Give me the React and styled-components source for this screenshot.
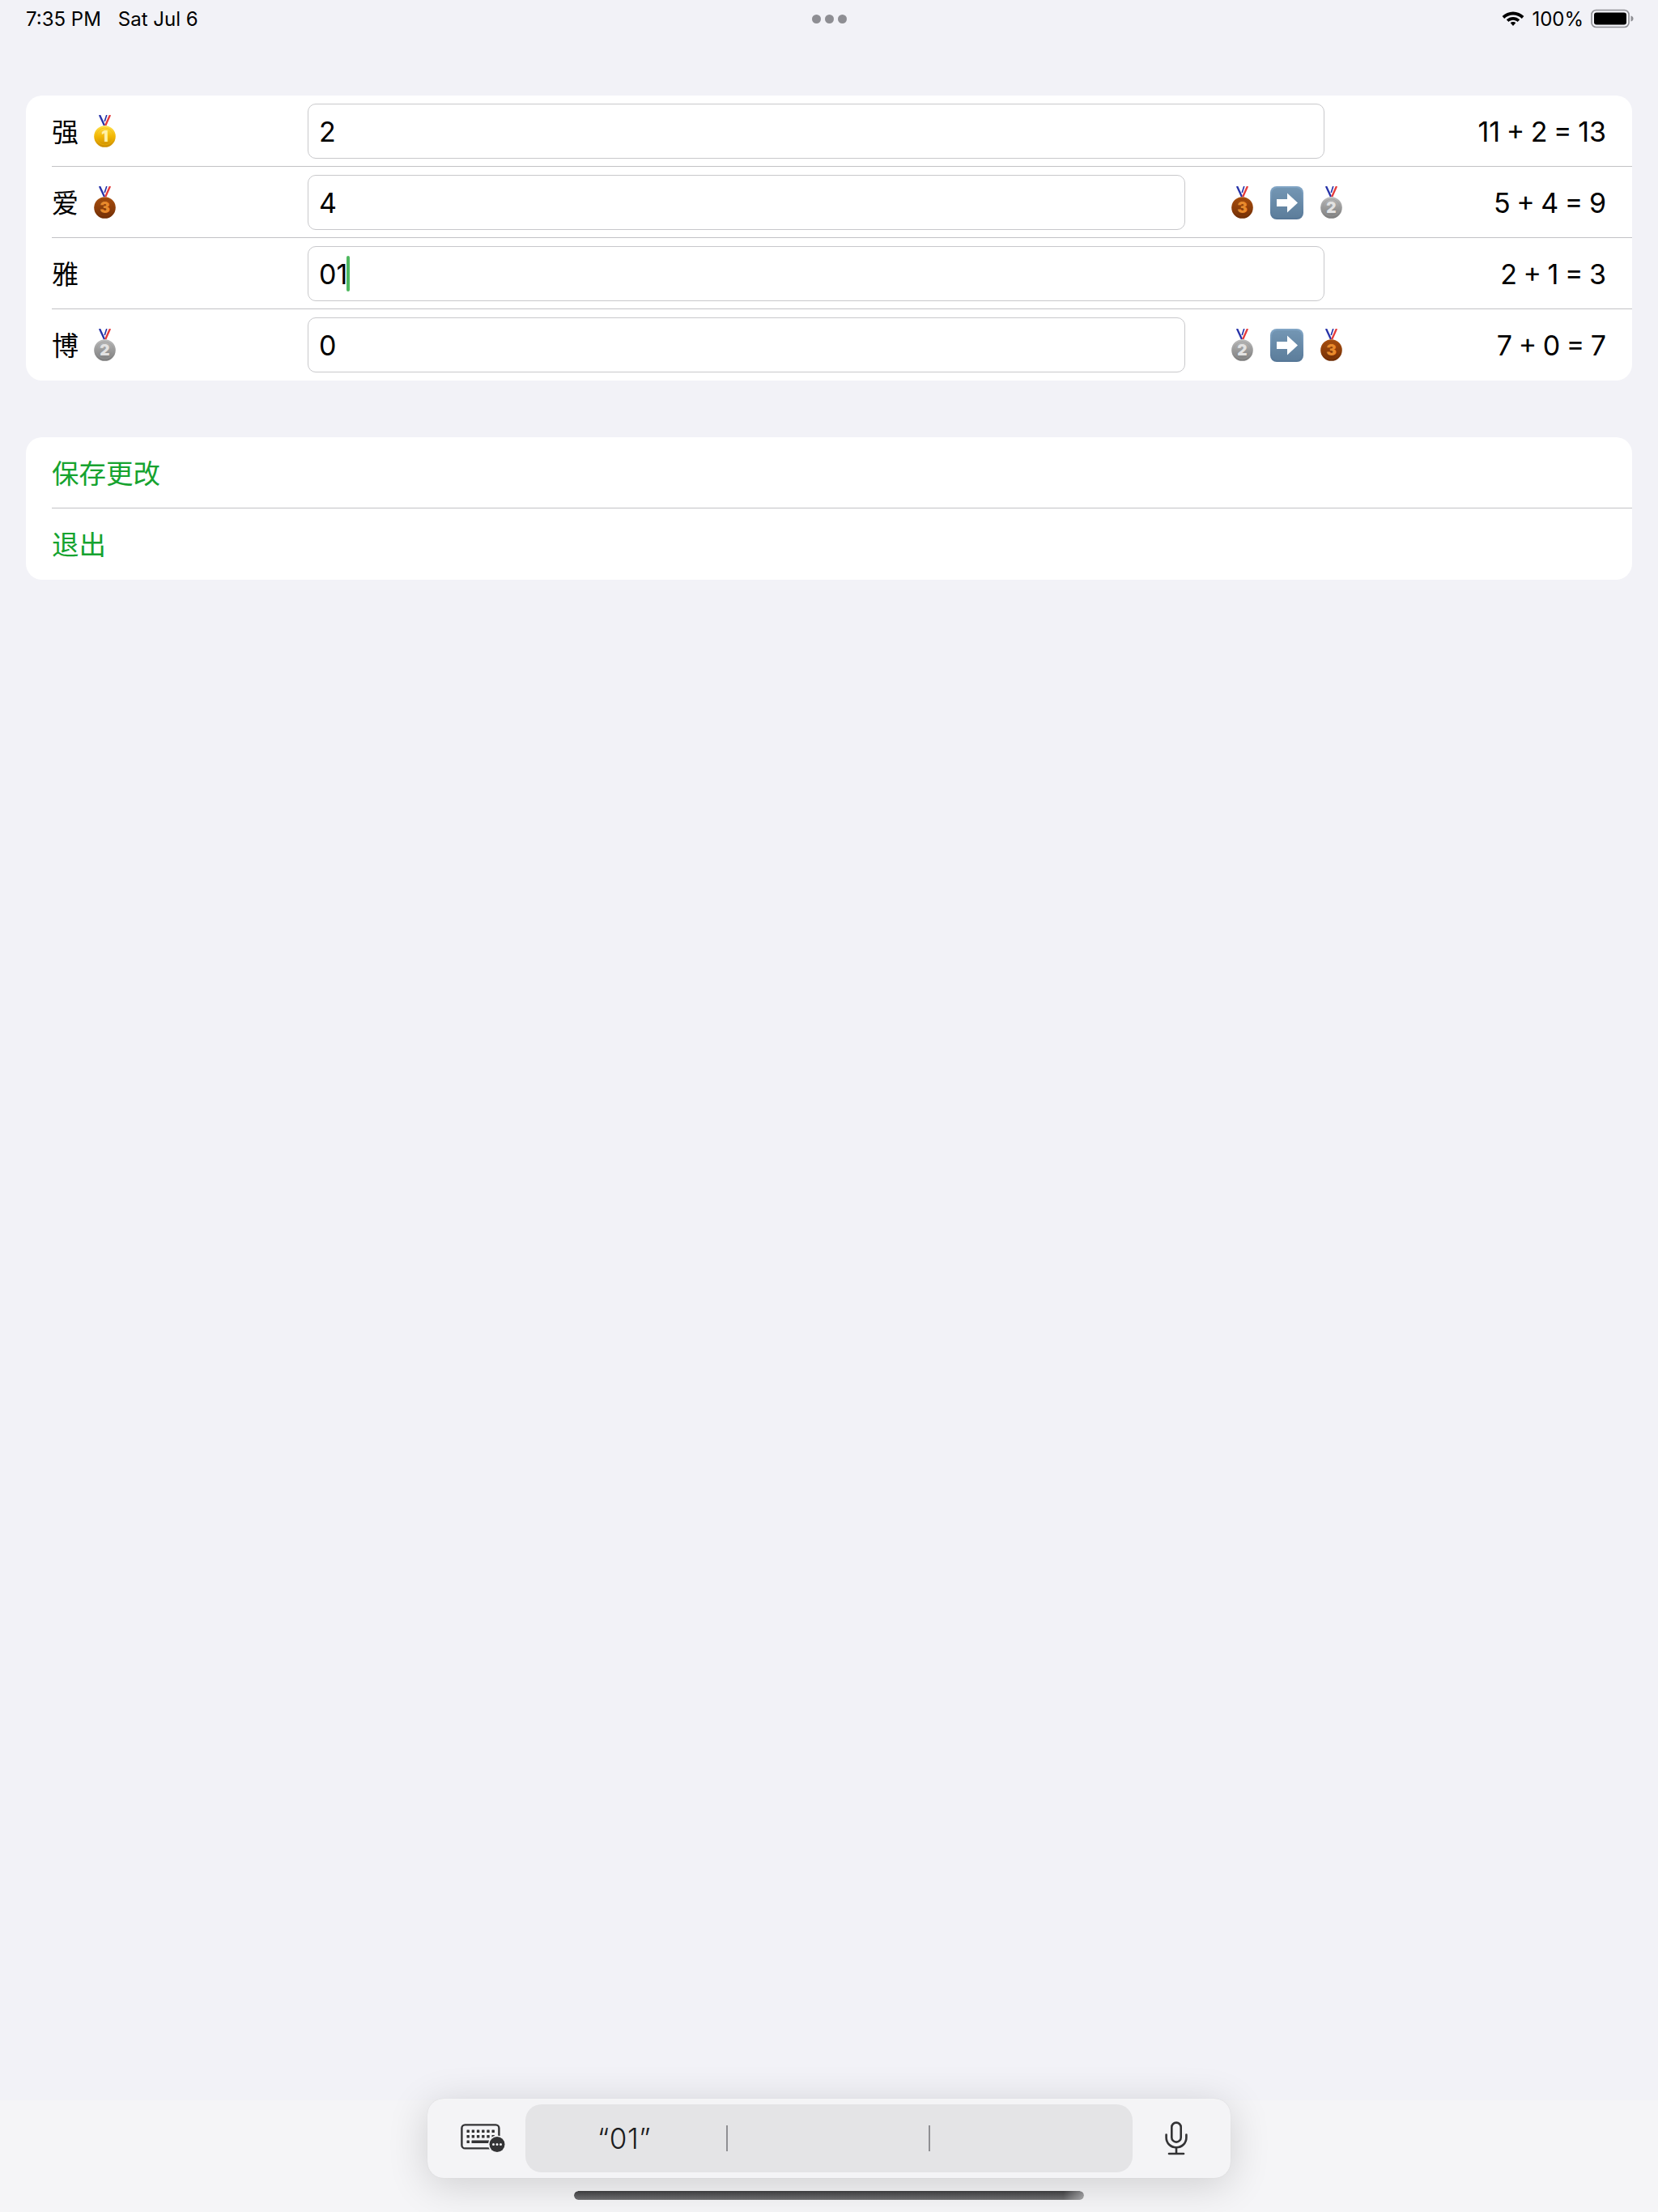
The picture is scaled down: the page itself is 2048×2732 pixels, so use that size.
import React from "react";
import styled, { createGlobalStyle } from "styled-components";

const Global = createGlobalStyle`
  html, body { margin: 0; padding: 0; background: #f2f2f7; }
`;

const LATIN = `Inter, "Noto Sans CJK SC", "Liberation Sans", sans-serif`;
const GREEN = "#16a32f";

const Page = styled.div`
  width: 2048px;
  height: 2732px;
  display: flex;
  flex-direction: column;
  background: #f2f2f7;
  font-family: ${LATIN};
  color: #000;
  overflow: hidden;
`;

const StatusBar = styled.div`
  height: 46px;
  flex: none;
  padding: 0 32px;
  display: grid;
  grid-template-columns: 1fr auto 1fr;
  align-items: center;
  font-size: 24px;
`;

const StatusLeft = styled.div`
  display: flex;
  gap: 21px;
`;

const StatusRight = styled.div`
  display: flex;
  align-items: center;
  justify-content: flex-end;
  gap: 9px;
  margin-right: -2px;
`;

const Dots = styled.div`
  display: flex;
  gap: 5px;
`;

const Dot = styled.span`
  width: 11px;
  height: 11px;
  border-radius: 50%;
  background: #8e8e93;
`;

const Content = styled.div`
  padding: 72px 32px 0;
  display: flex;
  flex-direction: column;
  gap: 70px;
`;

const Card = styled.section`
  background: #fff;
  border-radius: 20px;
  overflow: hidden;
`;

const Row = styled.div`
  height: 88px;
  box-sizing: border-box;
  margin-left: 32px;
  padding: 10px 32px 10px 0;
  display: flex;
  align-items: flex-start;
  border-bottom: 1px solid #c2c2c5;
  &:last-child {
    border-bottom: none;
  }
`;

const Name = styled.div`
  width: 316px;
  height: 68px;
  flex: none;
  display: flex;
  align-items: center;
  gap: 19px;
  font-size: 33px;
`;

const NameText = styled.span`
  margin-top: -3px;
`;

const Field = styled.div`
  width: ${(p) => (p.$short ? 1084 : 1256)}px;
  height: 68px;
  flex: none;
  box-sizing: border-box;
  padding-left: 13px;
  display: flex;
  align-items: center;
  border: 1px solid #c8c8cb;
  border-radius: 10px;
  font-size: 34px;
`;

const Caret = styled.span`
  width: 4px;
  height: 44px;
  margin-left: -1px;
  border-radius: 2px;
  background: #4fb85f;
`;

const Change = styled.div`
  height: 68px;
  margin-left: 57px;
  display: flex;
  align-items: center;
  gap: 21px;
`;

const Result = styled.div`
  height: 68px;
  padding-top: 1px;
  box-sizing: border-box;
  margin-left: auto;
  display: flex;
  align-items: center;
  font-size: 34px;
  word-spacing: -2px;
`;

const ActionRow = styled(Row)`
  align-items: center;
  padding-top: 0;
  padding-bottom: 3px;
  font-size: 33.5px;
  color: ${GREEN};
`;

const Spacer = styled.div`
  flex: 1;
`;

const Dock = styled.div`
  height: 138px;
  flex: none;
  background: #f5f5f7;
  display: flex;
  flex-direction: column;
  align-items: center;
`;

const Bar = styled.div`
  width: 992px;
  height: 98px;
  box-sizing: border-box;
  margin-top: -2px;
  padding: 7px 0;
  display: flex;
  align-items: stretch;
  border-radius: 20px;
  background: #f4f4f6;
  box-shadow: 0 8px 50px rgba(0, 0, 0, 0.16), 0 0 1px rgba(0, 0, 0, 0.12);
`;

const BarSide = styled.div`
  width: 121px;
  flex: none;
  box-sizing: border-box;
  display: flex;
  align-items: center;
  justify-content: center;
  padding: ${(p) => (p.$end ? "0 14px 0 0" : "0 0 0 16px")};
`;

const Suggestions = styled.div`
  width: 750px;
  flex: none;
  display: grid;
  grid-template-columns: repeat(3, 1fr);
  align-items: center;
  border-radius: 20px;
  background: #e4e4e6;
`;

const Suggestion = styled.div`
  height: 32px;
  display: flex;
  align-items: center;
  justify-content: center;
  font-size: 35px;
  font-weight: 300;
  letter-spacing: 0.5px;
  color: #1c1c1e;
  padding-right: 4px;
  border-right: ${(p) => (p.$divider ? "2px solid #8f8f93" : "none")};
`;

const HomeBar = styled.div`
  width: 630px;
  height: 11px;
  margin-top: 16px;
  border-radius: 6px;
  background: linear-gradient(180deg, #3c3c3e, #6e6e70);
  -webkit-mask-image: linear-gradient(90deg, #000 96%, rgba(0, 0, 0, 0.55));
`;

const MEDALS = {
  1: { a: "#ffe14d", b: "#f2b705", c: "#c98a00", t: "#fff1a8" },
  2: { a: "#bdbdbd", b: "#9a9a9a", c: "#7b7b7b", t: "#e2e2e2" },
  3: { a: "#a9500f", b: "#8f3f0a", c: "#6d2c05", t: "#e88a2c" },
};

function Medal({ rank }) {
  const m = MEDALS[rank];
  const id = `medal-${rank}`;
  return (
    <svg width="27" height="40" viewBox="0 0 27 40">
      <defs>
        <linearGradient id={id} x1="0" y1="0" x2="0" y2="1">
          <stop offset="0" stopColor={m.a} />
          <stop offset="0.5" stopColor={m.b} />
          <stop offset="1" stopColor={m.c} />
        </linearGradient>
      </defs>
      <path d="M7 0 L13 13" stroke="#2531a8" strokeWidth="2.3" fill="none" />
      <path d="M15.8 0 L13.2 8" stroke="#2531a8" strokeWidth="1.6" fill="none" />
      <path d="M20 0 L14.2 13" stroke="#e63a3a" strokeWidth="2.3" fill="none" />
      <circle cx="13.5" cy="26.5" r="13.3" fill={`url(#${id})`} />
      <circle cx="13.5" cy="26.5" r="10.5" fill="none" stroke={m.b} strokeWidth="1" opacity="0.6" />
      <text
        x="13.5"
        y="33.2"
        textAnchor="middle"
        fontFamily="Inter, sans-serif"
        fontWeight="900"
        fontSize="19"
        fill={m.t}
      >
        {rank}
      </text>
    </svg>
  );
}

function ArrowSquare() {
  return (
    <svg width="41" height="41" viewBox="0 0 41 41">
      <defs>
        <linearGradient id="arrow-square" x1="0" y1="0" x2="0" y2="1">
          <stop offset="0" stopColor="#82a6c6" />
          <stop offset="1" stopColor="#557696" />
        </linearGradient>
      </defs>
      <rect width="41" height="41" rx="8" fill="url(#arrow-square)" />
      <rect x="2" y="2" width="37" height="37" rx="6.5" fill="#64859f" opacity="0.45" />
      <path d="M8 16 H21 V8.5 L34 20.5 L21 32.5 V25 H8 Z" fill="#fff" />
    </svg>
  );
}

function Wifi() {
  return (
    <svg width="28" height="20" viewBox="0 0 28 20">
      <path d="M14 1.5 C19.2 1.5 23.8 3.6 27.4 7 L24.8 9.9 C21.9 7.1 18.1 5.4 14 5.4 C9.9 5.4 6.1 7.1 3.2 9.9 L0.6 7 C4.2 3.6 8.8 1.5 14 1.5 Z" fill="#000" />
      <path d="M14 8 C17.1 8 20 9.2 22.2 11.3 L19.6 14.1 C18.1 12.7 16.1 11.8 14 11.8 C11.9 11.8 9.9 12.7 8.4 14.1 L5.8 11.3 C8 9.2 10.9 8 14 8 Z" fill="#000" />
      <path d="M14 14 C15.3 14 16.4 14.5 17.3 15.3 L14 19 L10.7 15.3 C11.6 14.5 12.7 14 14 14 Z" fill="#000" />
    </svg>
  );
}

function Battery() {
  return (
    <svg width="53" height="24" viewBox="0 0 53 24">
      <rect x="1" y="1.5" width="46" height="21" rx="5.5" fill="none" stroke="#8e8e93" strokeWidth="1.6" />
      <rect x="4" y="4.5" width="40" height="15" rx="3" fill="#000" />
      <path d="M49.5 8.5 C51.5 9 52.5 10.3 52.5 12 C52.5 13.7 51.5 15 49.5 15.5 Z" fill="#8e8e93" />
    </svg>
  );
}

function KeyboardIcon() {
  const keys = [];
  [0, 1].forEach((r) => {
    for (let i = 0; i < 6; i++) {
      keys.push(<rect key={`${r}-${i}`} x={7.5 + i * 6.2} y={7.5 + r * 6.5} width="3.4" height="3.4" rx="0.5" fill="#333335" />);
    }
  });
  return (
    <svg width="56" height="36" viewBox="0 0 56 36">
      <rect x="1.4" y="1.4" width="46" height="29" rx="4" fill="none" stroke="#333335" strokeWidth="2.4" />
      {keys}
      <rect x="7.5" y="20.5" width="3.4" height="3.4" rx="0.5" fill="#333335" />
      <rect x="13.5" y="20.5" width="22" height="3.4" rx="0.5" fill="#333335" />
      <circle cx="45" cy="25.5" r="11" fill="#f4f4f6" />
      <circle cx="45" cy="25.5" r="9.5" fill="#333335" />
      <circle cx="40.5" cy="25.5" r="1.5" fill="#f4f4f6" />
      <circle cx="45" cy="25.5" r="1.5" fill="#f4f4f6" />
      <circle cx="49.5" cy="25.5" r="1.5" fill="#f4f4f6" />
    </svg>
  );
}

function MicIcon() {
  return (
    <svg width="28" height="42" viewBox="0 0 28 42" fill="none" stroke="#333335" strokeWidth="2.6" strokeLinecap="round">
      <rect x="8.3" y="1.6" width="11.4" height="24" rx="5.7" />
      <path d="M1.6 16.5 V20 C1.6 27 7 32.2 14 32.2 C21 32.2 26.4 27 26.4 20 V16.5" />
      <path d="M14 32.2 V39.5" />
      <path d="M5 40 H23" />
    </svg>
  );
}

const rows = [
  { name: "强", rank: 1, value: "2", result: "11 + 2 = 13" },
  { name: "爱", rank: 3, value: "4", from: 3, to: 2, result: "5 + 4 = 9" },
  { name: "雅", value: "01", caret: true, result: "2 + 1 = 3" },
  { name: "博", rank: 2, value: "0", from: 2, to: 3, result: "7 + 0 = 7" },
];

export default function App() {
  return (
    <Page>
      <Global />
      <StatusBar>
        <StatusLeft>
          <span>7:35 PM</span>
          <span>Sat Jul 6</span>
        </StatusLeft>
        <Dots>
          <Dot />
          <Dot />
          <Dot />
        </Dots>
        <StatusRight>
          <Wifi />
          <span>100%</span>
          <Battery />
        </StatusRight>
      </StatusBar>
      <Content>
        <Card>
          {rows.map((r) => (
            <Row key={r.name}>
              <Name>
                <NameText>{r.name}</NameText>
                {r.rank && <Medal rank={r.rank} />}
              </Name>
              <Field $short={!!r.from}>
                {r.value}
                {r.caret && <Caret />}
              </Field>
              {r.from && (
                <Change>
                  <Medal rank={r.from} />
                  <ArrowSquare />
                  <Medal rank={r.to} />
                </Change>
              )}
              <Result>{r.result}</Result>
            </Row>
          ))}
        </Card>
        <Card>
          <ActionRow>保存更改</ActionRow>
          <ActionRow>退出</ActionRow>
        </Card>
      </Content>
      <Spacer />
      <Dock>
        <Bar>
          <BarSide>
            <KeyboardIcon />
          </BarSide>
          <Suggestions>
            <Suggestion $divider>“01”</Suggestion>
            <Suggestion $divider />
            <Suggestion />
          </Suggestions>
          <BarSide $end>
            <MicIcon />
          </BarSide>
        </Bar>
        <HomeBar />
      </Dock>
    </Page>
  );
}
